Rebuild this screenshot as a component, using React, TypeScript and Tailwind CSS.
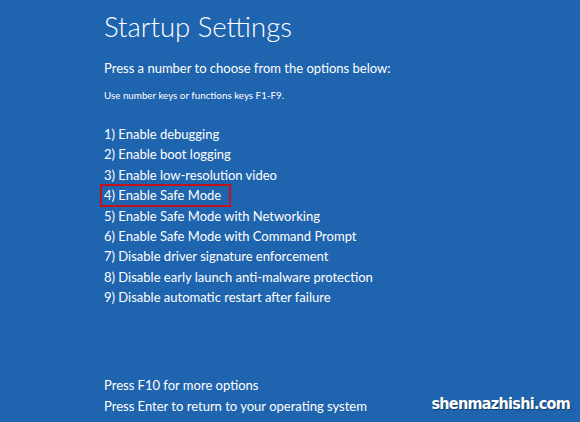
const options = [
  '1) Enable debugging',
  '2) Enable boot logging',
  '3) Enable low-resolution video',
  '4) Enable Safe Mode',
  '5) Enable Safe Mode with Networking',
  '6) Enable Safe Mode with Command Prompt',
  '7) Disable driver signature enforcement',
  '8) Disable early launch anti-malware protection',
  '9) Disable automatic restart after failure',
];

export default function App() {
  return (
    <div className="relative flex h-[422px] w-[580px] flex-col overflow-hidden bg-[#1f64ae] pl-[104px] text-white [font-family:Lato,sans-serif]">
      <h1 className="mt-[7px] text-[27.5px] leading-[40px] font-light">Startup Settings</h1>
      <p className="mt-[12px] text-[13px] leading-[18px]">Press a number to choose from the options below:</p>
      <p className="mt-[11px] text-[9.8px] leading-[14px]">Use number keys or functions keys F1-F9.</p>

      <ul className="mt-[22px] flex flex-col">
        {options.map((o, i) => (
          <li key={o} className="h-[20.4px] text-[13px] leading-[20px] whitespace-nowrap">
            {i === 3 ? (
              <span className="-ml-[4px] -mt-[1px] inline-block w-[131px] border-2 border-[#c3121c] pl-[2px] leading-[19px]">
                {o}
              </span>
            ) : (
              o
            )}
          </li>
        ))}
      </ul>

      <div className="mt-auto mb-[6px] flex flex-col text-[13px] leading-[20.5px]">
        <span>Press F10 for more options</span>
        <span>Press Enter to return to your operating system</span>
      </div>

      <span className="absolute right-[10px] bottom-[6px] text-[16px] font-bold tracking-[-0.7px] [font-family:'DejaVu_Sans_Condensed',sans-serif] [text-shadow:1px_1px_1px_rgba(0,0,0,0.4)]">
        shenmazhishi.com
      </span>
    </div>
  );
}
